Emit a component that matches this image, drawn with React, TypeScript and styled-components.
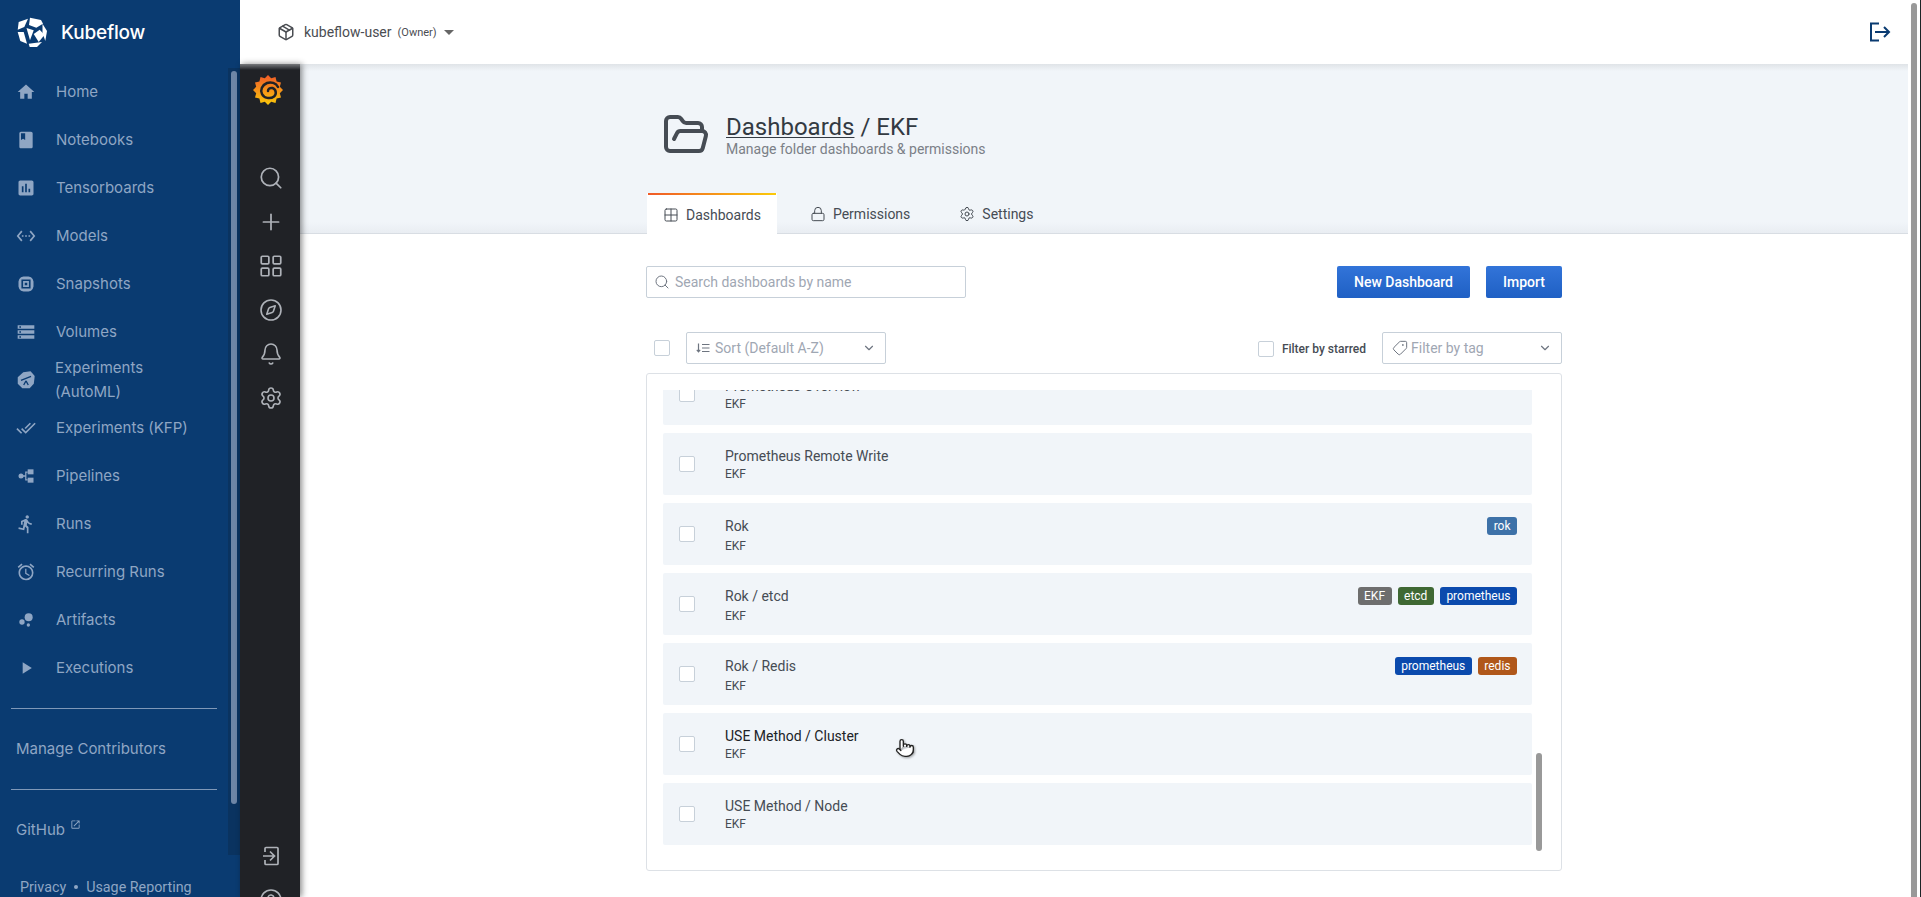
import React from 'react';
import styled, { createGlobalStyle } from 'styled-components';
import { Search, Plus, Compass, Bell, Settings, HelpCircle, Lock, Tag, ChevronDown, Package, Pointer, Grid2x2, FolderOpen, LayoutGrid } from 'lucide-react';
import {
  MdHome, MdBook, MdAssessment, MdSettingsEthernet, MdStorage, MdDoneAll, MdDirectionsRun,
  MdAlarm, MdBubbleChart, MdPlayArrow, MdOpenInNew, MdArrowDropDown,
} from 'react-icons/md';

const GlobalStyle = createGlobalStyle`
  html, body {
    margin: 0;
    height: 100%;
    overflow: hidden;
    background: #fff;
  }
  * {
    box-sizing: border-box;
  }
`;

const Root = styled.div`
  position: relative;
  display: flex;
  width: 100vw;
  height: 100vh;
  overflow: hidden;
  border-right: 1px solid #1c2426;
  font-family: Roboto, "Liberation Sans", sans-serif;
`;

const Sidebar = styled.aside`
  display: flex;
  flex-direction: column;
  flex: 0 0 240px;
  background: #0a3b71;
  color: #8fa6c4;
`;

const Brand = styled.div`
  display: flex;
  align-items: center;
  gap: 14px;
  height: 64px;
  padding-left: 17px;
  color: #fff;
  font-family: Inter, sans-serif;
  font-size: 19px;
  font-weight: 500;
  letter-spacing: -0.2px;
`;

const SideBody = styled.div`
  display: flex;
  height: 791px;
`;

const NavColumn = styled.nav`
  flex: 1;
  padding-top: 4px;
`;

const NavItem = styled.div<{ $tight?: boolean }>`
  display: flex;
  align-items: center;
  gap: ${p => (p.$tight ? '17px' : '18px')};
  height: 48px;
  padding-left: 14px;
  font-family: Inter, sans-serif;
  font-size: 15px;
  line-height: 24px;
`;

const NavIcon = styled.span`
  display: flex;
  align-items: center;
  justify-content: center;
  flex: 0 0 24px;
  height: 24px;
`;

const Divider = styled.hr<{ $top: number }>`
  margin: ${p => p.$top}px 11px 0;
  width: 206px;
  border: 0;
  border-top: 1px solid #7f98b8;
`;

const PlainLink = styled.div<{ $top: number }>`
  display: flex;
  align-items: flex-start;
  margin-top: ${p => p.$top}px;
  padding-left: 16px;
  height: 24px;
  line-height: 24px;
  font-family: Inter, sans-serif;
  font-size: 15px;
  svg {
    margin: 1px 0 0 5px;
  }
`;

const SideTrack = styled.div`
  flex: 0 0 12px;
  margin-top: 4px;
  padding: 3px 3px 0;
  background: #0a3360;
`;

const SideThumb = styled.div`
  height: 733px;
  border-radius: 3px;
  background: #6e86a6;
`;

const Footer = styled.div`
  display: flex;
  align-items: center;
  gap: 8px;
  padding: 22px 0 0 20px;
  font-size: 14.3px;
  line-height: 20px;
`;

const Dot = styled.span`
  width: 4px;
  height: 4px;
  border-radius: 50%;
  background: #8fa6c4;
`;

const Main = styled.div`
  display: flex;
  flex-direction: column;
  flex: 1;
  min-width: 0;
`;

const Topbar = styled.header`
  display: flex;
  align-items: center;
  flex: 0 0 64px;
  padding: 0 29px 0 37px;
  background: #fff;
  color: #3c4043;
`;

const Namespace = styled.div`
  display: flex;
  align-items: center;
  font-size: 14px;
  color: #4a4d52;
`;

const Role = styled.span`
  margin: 1px 0 0 6px;
  font-size: 11px;
`;

const LogoutButton = styled.div`
  display: flex;
  margin-left: auto;
  color: #0a3b71;
`;

const Work = styled.div`
  display: flex;
  flex: 1;
  min-height: 0;
`;

const SideMenu = styled.div`
  position: relative;
  z-index: 1;
  display: flex;
  flex-direction: column;
  flex: 0 0 60px;
  background: linear-gradient(#77797c 0, #202226 6px);
  color: #aeb2b8;
  box-shadow: 2px 0 6px rgba(0, 0, 0, 0.45);
`;

const MenuLogo = styled.div`
  display: flex;
  justify-content: center;
  height: 92px;
  padding: 11px 5px 0 0;
`;

const MenuItem = styled.div`
  display: flex;
  align-items: center;
  justify-content: center;
  height: 44px;
  padding-left: 2px;
`;

const MenuBottom = styled.div`
  margin-top: auto;
  margin-bottom: -25px;
`;

const Page = styled.div`
  flex: 1;
  min-width: 0;
  background: #fff;
  color: #464c54;
`;

const PageHeader = styled.div`
  height: 170px;
  border-bottom: 1px solid #d8dde3;
  background: linear-gradient(#dfe3e7 0, #f1f5f9 7px, #f1f5f9 158px, #e9edf2 169px);
`;

const Container = styled.div`
  width: 916px;
  margin: 0 auto;
`;

const HeaderTitle = styled.div`
  display: flex;
  align-items: flex-start;
  height: 129px;
  padding: 49px 0 0 16px;
`;

const FolderIcon = styled.div`
  flex: 0 0 52px;
  margin: -2px 12px 0 0;
  color: #464c54;
`;

const Title = styled.h1`
  margin: 0;
  font-size: 24px;
  font-weight: 400;
  line-height: 28px;
  color: #333a42;
  a {
    color: inherit;
    text-decoration: underline;
    text-decoration-thickness: 1px;
    text-underline-offset: 2px;
  }
`;

const Subtitle = styled.div`
  margin-top: -1px;
  font-size: 14px;
  line-height: 18px;
  color: #7b8087;
`;

const Tabs = styled.div`
  display: flex;
  height: 41px;
  gap: 17px;
  padding-left: 1px;
`;

const TabItem = styled.div<{ $active?: boolean; $pad?: number }>`
  display: flex;
  align-items: center;
  gap: 7px;
  height: 41px;
  padding: 0 15px 0 ${p => p.$pad ?? 16}px;
  font-size: 14px;
  color: #464c54;
  ${p => p.$active && `
    background: #fff;
    border-left: 1px solid #e6e9ed;
    border-right: 1px solid #dfe3e8;
    padding-left: 15px;
    border-top: 2px solid;
    border-image: linear-gradient(90deg, #f05a28, #fbca0a) 1 0 0 0;
  `}
`;

const Toolbar = styled.div`
  display: flex;
  align-items: center;
  margin-top: 32px;
`;

const SearchBox = styled.div`
  display: flex;
  align-items: center;
  gap: 5px;
  width: 320px;
  height: 32px;
  padding-left: 7px;
  border: 1px solid #c7d0d9;
  border-radius: 2px;
  font-size: 14px;
  color: #9fa7b3;
`;

const BlueButton = styled.button<{ $wide?: boolean }>`
  display: flex;
  align-items: center;
  justify-content: center;
  width: ${p => (p.$wide ? '133px' : '76px')};
  height: 32px;
  margin-left: ${p => (p.$wide ? 'auto' : '16px')};
  border: 0;
  border-radius: 2px;
  background: linear-gradient(#3274d9, #1f60c4);
  color: #fff;
  font-family: inherit;
  font-size: 14px;
  font-weight: 500;
`;

const FilterBar = styled.div`
  display: flex;
  align-items: center;
  height: 32px;
  margin-top: 34px;
  padding-left: 8px;
`;

const Check = styled.span`
  flex: 0 0 16px;
  width: 16px;
  height: 16px;
  border: 1px solid #c7d0d9;
  border-radius: 2px;
  background: #fff;
`;

const SelectBox = styled.div<{ $width: number }>`
  display: flex;
  align-items: center;
  gap: 5px;
  width: ${p => p.$width}px;
  height: 32px;
  padding: 0 9px 0 9px;
  border: 1px solid #c7d0d9;
  border-radius: 2px;
  font-size: 14px;
  color: #9fa7b3;
  > svg:last-child {
    margin-left: auto;
    color: #6e7580;
  }
`;

const SortBox = styled(SelectBox)`
  margin-left: 16px;
`;

const StarFilter = styled.div`
  display: flex;
  align-items: center;
  gap: 8px;
  margin-left: auto;
  margin-right: 16px;
  padding-top: 1px;
  font-size: 12px;
  font-weight: 500;
  color: #464c54;
`;

const ListBox = styled.div`
  position: relative;
  height: 498px;
  margin-top: 9px;
  padding: 16px 29px 25px 16px;
  border: 1px solid #dde1e6;
  border-radius: 3px;
`;

const ListViewport = styled.div`
  display: flex;
  flex-direction: column;
  justify-content: flex-end;
  gap: 8px;
  height: 100%;
  overflow: hidden;
`;

const Row = styled.div`
  display: flex;
  flex: 0 0 62px;
  height: 62px;
  padding: 0 15px 0 16px;
  border-radius: 2px;
  background: #f1f5f9;
`;

const RowCheck = styled(Check)`
  margin: 23px 30px 0 0;
`;

const RowBody = styled.div`
  flex: 1;
  padding-top: 14px;
`;

const RowHead = styled.div`
  display: flex;
  align-items: center;
  justify-content: space-between;
  height: 18px;
`;

const RowTitle = styled.div<{ $hover?: boolean }>`
  font-size: 14px;
  color: ${p => (p.$hover ? '#202226' : '#464c54')};
`;

const RowSub = styled.div<{ $tagged?: boolean }>`
  margin-top: ${p => (p.$tagged ? '3px' : '1px')};
  font-size: 12px;
  line-height: 16px;
  color: #464c54;
`;

const TagList = styled.div`
  display: flex;
  gap: 6px;
`;

const TagPill = styled.span<{ $color: string }>`
  display: flex;
  align-items: center;
  height: 18px;
  padding: 0 6.5px;
  border-radius: 3px;
  background: ${p => p.$color};
  color: #fff;
  font-size: 12px;
`;

const ListThumb = styled.div`
  position: absolute;
  top: 379px;
  right: 19px;
  width: 6px;
  height: 98px;
  border-radius: 3px;
  background: #999;
`;

const Gutter = styled.div`
  flex: 0 0 12px;
  background: #fff;
`;

const PageThumb = styled.div`
  position: absolute;
  top: 3px;
  right: 3px;
  bottom: 0;
  width: 6px;
  border-radius: 3px 3px 0 0;
  background: #999;
`;

const CursorMark = styled.div`
  position: absolute;
  left: 895px;
  top: 738px;
  display: flex;
  filter: drop-shadow(1px 1px 1px rgba(0, 0, 0, 0.35));
`;

const KubeflowLogo = () => (
  <svg width="30" height="30" viewBox="0 0 30 30" fill="#fff">
    <path d="M13 0.700 L24 3 L26 6.700 L19.300 10.700 L12 8 Z" />
    <path d="M1.700 5 L11 1.700 L7.300 10 L0.700 12.700 Z" />
    <path d="M0.700 15 L6.700 15 L10 26.700 L3.300 24 Z" />
    <path d="M11.700 26.700 L25 25 L20 30 L12.700 30 Z" />
    <path d="M25.500 6.700 L30 14 L28.300 24 L25.500 16 Z" />
    <path d="M9.500 11 L16.700 13.300 L13 23.300 Z" />
    <path d="M16.700 17 L22.700 12.700 L27.500 18 L21.700 25 Z" />
  </svg>
);

// 12 toothed sun with the swirl on top
const starPoints = Array.from({ length: 24 }, (_, i) => {
  const angle = (i / 24) * Math.PI * 2 - Math.PI / 2;
  const radius = i % 2 === 0 ? 15 : 12.2;
  return `${(15 + radius * Math.cos(angle)).toFixed(1)},${(15 + radius * Math.sin(angle)).toFixed(1)}`;
}).join(' ');

const GrafanaLogo = () => (
  <svg width="30" height="30" viewBox="0 0 30 30">
    <defs>
      <linearGradient id="grafanaFill" x1="0" y1="0" x2="0" y2="1">
        <stop offset="0" stopColor="#f05a28" />
        <stop offset="1" stopColor="#fbca0a" />
      </linearGradient>
    </defs>
    <polygon points={starPoints} fill="url(#grafanaFill)" />
    <path
      d="M25 12 C23 8 18 6.500 14 8 C9 10 7 15 9 19 C11 23 17 24.500 21 21.500 C24 19 23 14 19.500 13 C17 12.500 15 14 15 16"
      fill="none"
      stroke="#202226"
      strokeWidth="2.500"
      strokeLinecap="round"
    />
  </svg>
);

const SignInIcon = () => (
  <svg width="24" height="24" viewBox="0 0 24 24" fill="none" stroke="currentColor" strokeWidth="1.700">
    <path d="M6 8V4.500a1 1 0 0 1 1-1h11a1 1 0 0 1 1 1v15a1 1 0 0 1-1 1H7a1 1 0 0 1-1-1V16" />
    <path d="M4 12h11M11 7.500l4.500 4.500-4.500 4.500" />
  </svg>
);

const SnapshotIcon = () => (
  <svg width="20" height="20" viewBox="0 0 24 24" fill="currentColor">
    <path fillRule="evenodd" d="M9 3h6l3 1 2 2 1 3v6l-1 3-2 2-3 1H9l-3-1-2-2-1-3V9l1-3 2-2zM6.500 6.500v11h11v-11z" />
    <path fillRule="evenodd" d="M8.500 8.500h7v7h-7zM10.500 10.500v3h3v-3z" />
  </svg>
);

const TelescopeIcon = () => (
  <svg width="22" height="22" viewBox="0 0 24 24">
    <path d="M9 3.500 L17 2.500 L21.500 7.500 L20.500 16 L16 21 L8 21 L3 16 L3 9 Z" fill="currentColor" />
    <path d="M6.500 12.500 L17.500 8 M12 13 L9.500 17.500 M12 13 L14.500 17.500" stroke="#0a3b71" strokeWidth="1.400" fill="none" />
  </svg>
);

const PipelineIcon = () => (
  <svg width="20" height="20" viewBox="0 0 24 24" fill="currentColor">
    <circle cx="6" cy="12" r="3" />
    <rect x="14" y="4" width="7" height="6" />
    <rect x="14" y="14" width="7" height="6" />
    <path d="M8 11h3V6.500h3v1.500h-1.500v8H14v1.500h-3V13H8z" />
  </svg>
);

const LogoutIcon = () => (
  <svg width="22" height="20" viewBox="0 0 22 20" fill="none" stroke="currentColor" strokeWidth="2">
    <path d="M10 1.500H2v17h8" />
    <path d="M6 10h14M15 5l5 5-5 5" />
  </svg>
);

const SortIcon = () => (
  <svg width="14" height="14" viewBox="0 0 14 14" fill="none" stroke="#6e7580" strokeWidth="1.200">
    <path d="M2.500 2.500v8M0.800 8.800l1.700 2 1.700-2" />
    <path d="M6 3.500h7.500M6 7h7.500M6 10.500h7.500" />
  </svg>
);

interface NavEntry {
  label: React.ReactNode;
  icon: React.ReactNode;
  tight?: boolean;
}

const navEntries: NavEntry[] = [
  { label: 'Home', icon: <MdHome size={20} /> },
  { label: 'Notebooks', icon: <MdBook size={20} /> },
  { label: 'Tensorboards', icon: <MdAssessment size={20} /> },
  { label: 'Models', icon: <MdSettingsEthernet size={20} /> },
  { label: 'Snapshots', icon: <SnapshotIcon /> },
  { label: 'Volumes', icon: <MdStorage size={20} /> },
  { label: <span>Experiments<br />(AutoML)</span>, icon: <TelescopeIcon />, tight: true },
  { label: 'Experiments (KFP)', icon: <MdDoneAll size={20} /> },
  { label: 'Pipelines', icon: <PipelineIcon /> },
  { label: 'Runs', icon: <MdDirectionsRun size={20} /> },
  { label: 'Recurring Runs', icon: <MdAlarm size={20} /> },
  { label: 'Artifacts', icon: <MdBubbleChart size={20} /> },
  { label: 'Executions', icon: <MdPlayArrow size={20} /> },
];

const menuIcons = [
  { Icon: Search, size: 26 },
  { Icon: Plus, size: 26 },
  { Icon: LayoutGrid, size: 26 },
  { Icon: Compass, size: 24 },
  { Icon: Bell, size: 24 },
  { Icon: Settings, size: 24 },
];

interface DashboardRow {
  title: string;
  tags?: { label: string; color: string }[];
  hover?: boolean;
}

const dashboardRows: DashboardRow[] = [
  { title: 'Prometheus Overview' },
  { title: 'Prometheus Remote Write' },
  { title: 'Rok', tags: [{ label: 'rok', color: '#3d71a8' }] },
  {
    title: 'Rok / etcd',
    tags: [
      { label: 'EKF', color: '#6e6e6e' },
      { label: 'etcd', color: '#3f6833' },
      { label: 'prometheus', color: '#0b4aad' },
    ],
  },
  {
    title: 'Rok / Redis',
    tags: [
      { label: 'prometheus', color: '#0b4aad' },
      { label: 'redis', color: '#b0571a' },
    ],
  },
  { title: 'USE Method / Cluster', hover: true },
  { title: 'USE Method / Node' },
];

export default function App() {
  return (
    <Root>
      <GlobalStyle />
      <Sidebar>
        <Brand>
          <KubeflowLogo />
          Kubeflow
        </Brand>
        <SideBody>
          <NavColumn>
            {navEntries.map((entry, i) => (
              <NavItem key={i} $tight={entry.tight}>
                <NavIcon>{entry.icon}</NavIcon>
                {entry.label}
              </NavItem>
            ))}
            <Divider $top={16} />
            <PlainLink $top={28}>Manage Contributors</PlainLink>
            <Divider $top={28} />
            <PlainLink $top={28}>
              GitHub
              <MdOpenInNew size={11} />
            </PlainLink>
          </NavColumn>
          <SideTrack>
            <SideThumb />
          </SideTrack>
        </SideBody>
        <Footer>
          Privacy
          <Dot />
          Usage Reporting
        </Footer>
      </Sidebar>

      <Main>
        <Topbar>
          <Namespace>
            <Package size={18} strokeWidth={2} style={{ marginRight: 9 }} />
            kubeflow-user
            <Role>(Owner)</Role>
            <MdArrowDropDown size={24} color="#666" />
          </Namespace>
          <LogoutButton>
            <LogoutIcon />
          </LogoutButton>
        </Topbar>

        <Work>
          <SideMenu>
            <MenuLogo>
              <GrafanaLogo />
            </MenuLogo>
            {menuIcons.map(({ Icon, size }, i) => (
              <MenuItem key={i}>
                <Icon size={size} strokeWidth={1.6} />
              </MenuItem>
            ))}
            <MenuBottom>
              <MenuItem>
                <SignInIcon />
              </MenuItem>
              <MenuItem>
                <HelpCircle size={24} strokeWidth={1.6} />
              </MenuItem>
            </MenuBottom>
          </SideMenu>

          <Page>
            <PageHeader>
              <Container>
                <HeaderTitle>
                  <FolderIcon>
                    <FolderOpen size={48} strokeWidth={2} />
                  </FolderIcon>
                  <div>
                    <Title>
                      <a>Dashboards</a> / EKF
                    </Title>
                    <Subtitle>Manage folder dashboards &amp; permissions</Subtitle>
                  </div>
                </HeaderTitle>
                <Tabs>
                  <TabItem $active>
                    <Grid2x2 size={16} strokeWidth={1.5} />
                    Dashboards
                  </TabItem>
                  <TabItem>
                    <Lock size={16} strokeWidth={1.5} />
                    Permissions
                  </TabItem>
                  <TabItem $pad={17}>
                    <Settings size={16} strokeWidth={1.5} />
                    Settings
                  </TabItem>
                </Tabs>
              </Container>
            </PageHeader>

            <Container>
              <Toolbar>
                <SearchBox>
                  <Search size={16} color="#6e7580" strokeWidth={1.5} />
                  Search dashboards by name
                </SearchBox>
                <BlueButton $wide>New Dashboard</BlueButton>
                <BlueButton>Import</BlueButton>
              </Toolbar>

              <FilterBar>
                <Check />
                <SortBox $width={200}>
                  <SortIcon />
                  Sort (Default A-Z)
                  <ChevronDown size={14} />
                </SortBox>
                <StarFilter>
                  <Check />
                  Filter by starred
                </StarFilter>
                <SelectBox $width={180}>
                  <Tag size={16} color="#6e7580" strokeWidth={1.5} style={{ transform: 'scaleX(-1)', marginRight: -2 }} />
                  Filter by tag
                  <ChevronDown size={14} />
                </SelectBox>
              </FilterBar>

              <ListBox>
                <ListViewport>
                  {dashboardRows.map(row => (
                    <Row key={row.title}>
                      <RowCheck />
                      <RowBody>
                        <RowHead>
                          <RowTitle $hover={row.hover}>{row.title}</RowTitle>
                          {row.tags && (
                            <TagList>
                              {row.tags.map(tag => (
                                <TagPill key={tag.label} $color={tag.color}>
                                  {tag.label}
                                </TagPill>
                              ))}
                            </TagList>
                          )}
                        </RowHead>
                        <RowSub $tagged={!!row.tags}>EKF</RowSub>
                      </RowBody>
                    </Row>
                  ))}
                </ListViewport>
                <ListThumb />
              </ListBox>
            </Container>
          </Page>
          <Gutter />
        </Work>
      </Main>

      <PageThumb />
      <CursorMark>
        <Pointer size={20} fill="#fff" color="#222" strokeWidth={1.6} />
      </CursorMark>
    </Root>
  );
}
